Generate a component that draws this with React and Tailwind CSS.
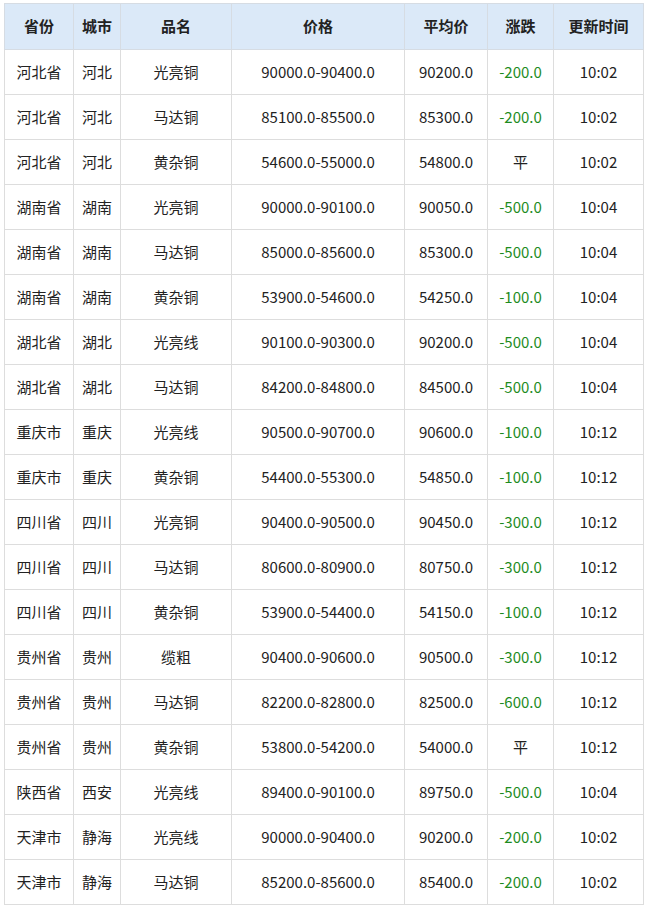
const rows = [
  ['河北省','河北','光亮铜','90000.0-90400.0','90200.0','-200.0','10:02'],
  ['河北省','河北','马达铜','85100.0-85500.0','85300.0','-200.0','10:02'],
  ['河北省','河北','黄杂铜','54600.0-55000.0','54800.0','平','10:02'],
  ['湖南省','湖南','光亮铜','90000.0-90100.0','90050.0','-500.0','10:04'],
  ['湖南省','湖南','马达铜','85000.0-85600.0','85300.0','-500.0','10:04'],
  ['湖南省','湖南','黄杂铜','53900.0-54600.0','54250.0','-100.0','10:04'],
  ['湖北省','湖北','光亮线','90100.0-90300.0','90200.0','-500.0','10:04'],
  ['湖北省','湖北','马达铜','84200.0-84800.0','84500.0','-500.0','10:04'],
  ['重庆市','重庆','光亮线','90500.0-90700.0','90600.0','-100.0','10:12'],
  ['重庆市','重庆','黄杂铜','54400.0-55300.0','54850.0','-100.0','10:12'],
  ['四川省','四川','光亮铜','90400.0-90500.0','90450.0','-300.0','10:12'],
  ['四川省','四川','马达铜','80600.0-80900.0','80750.0','-300.0','10:12'],
  ['四川省','四川','黄杂铜','53900.0-54400.0','54150.0','-100.0','10:12'],
  ['贵州省','贵州','缆粗','90400.0-90600.0','90500.0','-300.0','10:12'],
  ['贵州省','贵州','马达铜','82200.0-82800.0','82500.0','-600.0','10:12'],
  ['贵州省','贵州','黄杂铜','53800.0-54200.0','54000.0','平','10:12'],
  ['陕西省','西安','光亮线','89400.0-90100.0','89750.0','-500.0','10:04'],
  ['天津市','静海','光亮线','90000.0-90400.0','90200.0','-200.0','10:02'],
  ['天津市','静海','马达铜','85200.0-85600.0','85400.0','-200.0','10:02'],
];
const heads = ['省份','城市','品名','价格','平均价','涨跌','更新时间'];
const widths = ['w-[69px]','w-[47px]','w-[111px]','w-[173px]','w-[83px]','w-[66px]','w-[90px]'];

export default function App() {
  return (
    <div className="w-[646px] h-[906px] bg-white pt-[3px] pl-[4px] overflow-hidden" style={{ fontFamily: '"Noto Sans CJK SC", "Noto Sans", sans-serif' }}>
      <table className="table-fixed border-collapse text-[15px] text-[#222]">
        <thead>
          <tr className="h-[46px] bg-[#dbe9f8]">
            {heads.map((h, i) => (
              <th key={i} className={`${widths[i]} border border-[#d6dce3] font-bold text-center`}>{h}</th>
            ))}
          </tr>
        </thead>
        <tbody>
          {rows.map((r, ri) => (
            <tr key={ri} className="h-[45px]">
              {r.map((c, ci) => (
                <td key={ci} className={`border border-[#dddddd] text-center ${ci === 5 && c !== '平' ? 'text-[#1e8c1e]' : ''}`}>{c}</td>
              ))}
            </tr>
          ))}
        </tbody>
      </table>
    </div>
  );
}
